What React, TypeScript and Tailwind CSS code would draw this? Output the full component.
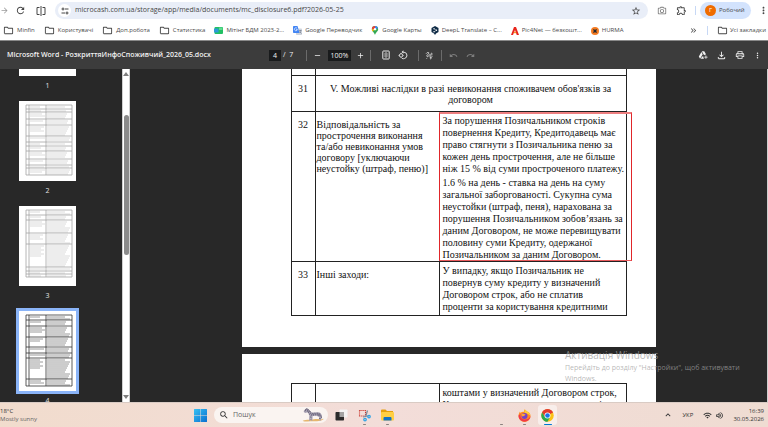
import React from "react";
import {
  MdArrowForward,
  MdRefresh,
  MdStarBorder,
  MdOutlineCameraAlt,
  MdOutlineExtension,
  MdMoreVert,
  MdAdd,
  MdRemove,
  MdRotate90DegreesCcw,
  MdUndo,
  MdRedo,
  MdOutlineAddToDrive,
  MdOutlineFileDownload,
  MdOutlinePrint,
  MdOutlineFolder,
  MdWifi,
  MdOutlineVolumeUp,
  MdKeyboardArrowUp,
  MdKeyboardDoubleArrowRight,
  MdSearch,
} from "react-icons/md";

/* ===== ICONS ===== */

const SplitIcon = () => (
  <svg viewBox="0 0 20 20" className="size-[10px]" fill="none" stroke="currentColor" strokeWidth="2">
    <path d="M7 3H2v14h5M10 0v20M13 3h5v14h-5" />
  </svg>
);

const TuneIcon = () => (
  <svg viewBox="0 0 16 16" className="size-[8px]" fill="none" stroke="currentColor" strokeWidth="2">
    <path d="M8 4h7M1 12h7" />
    <circle cx="4" cy="4" r="2" />
    <circle cx="12" cy="12" r="2" />
  </svg>
);

const FitIcon = () => (
  <svg viewBox="0 0 20 24" className="h-[10px] w-[8px]" fill="none" stroke="currentColor" strokeWidth="2.4">
    <rect x="2" y="2" width="16" height="20" rx="1.5" />
    <path d="M7 9l3-3 3 3M7 15l3 3 3-3M6 12h8" />
  </svg>
);

const DrawIcon = () => (
  <svg viewBox="0 0 24 24" className="size-[9px]" fill="none" stroke="currentColor" strokeWidth="2.2">
    <path d="M3 7c3-4 8-4 7-1-1 3-6 5-5 8 1 2 5-1 8-4s5-5 6-3-6 6-6 9 5 0 7-2" />
    <path d="M4 20l2-1M13 20c2 2 5 0 3-3" />
  </svg>
);

const SheetIcon = () => (
  <svg viewBox="0 0 18 14" className="h-[7px] w-[9px]">
    <rect x="1" width="17" height="14" rx="2" fill="#21c063" />
    <rect y="3" width="9" height="8" rx="1" fill="#2c9ad8" />
    <path d="M10 1h7v5h-7z" fill="#5fdc90" />
  </svg>
);

const TranslateIcon = () => (
  <svg viewBox="0 0 18 18" className="size-[9px]">
    <rect x="6" y="5" width="12" height="13" rx="1.5" fill="#cfd4dd" />
    <path d="M1.5 0H9l4 14H1.500A1.500 1.500 0 010 12.500v-11A1.500 1.500 0 011.500 0z" fill="#4285f4" />
    <path d="M8 4.500A3 3 0 106 9.500c1.700 0 2.700-1 2.700-2.700H6" fill="none" stroke="#fff" strokeWidth="1.300" />
    <path d="M12 9h5M15 8v1M16 9c-.5 2-1 3-3 5M13 11l4 4" fill="none" stroke="#5f6b7d" strokeWidth="1" />
  </svg>
);

const MapsIcon = () => (
  <svg viewBox="0 0 16 20" className="h-[9px] w-[8px]">
    <path d="M8 0a7 7 0 017 7c0 5-5 6-7 13C6 13 1 12 1 7a7 7 0 017-7z" fill="#34a853" />
    <path d="M1 7a7 7 0 017-7v7z" fill="#ea4335" />
    <path d="M8 0a7 7 0 016.700 5L8 7z" fill="#4285f4" />
    <path d="M1 7l7 0-5.500 5A8 8 0 011 7z" fill="#fbbc04" />
    <circle cx="8" cy="7" r="2.600" fill="#fff" />
  </svg>
);

const DeeplIcon = () => (
  <svg viewBox="0 0 16 18" className="h-[9px] w-[8px]">
    <path d="M8 0l7 4v8l-5 3-2 3-2-3-5-3V4z" fill="#0f2b46" />
    <path d="M6 5.500l5 3-5 3" fill="none" stroke="#fff" strokeWidth="1" />
    <circle cx="6" cy="5.500" r="1.300" fill="#fff" />
    <circle cx="11" cy="8.500" r="1.300" fill="#fff" />
    <circle cx="6" cy="11.500" r="1.300" fill="#fff" />
  </svg>
);

const PicIcon = () => (
  <svg viewBox="0 0 16 16" className="size-[8px]">
    <path d="M6 0h4l6 16h-4.500L8 6 4 16H0z" fill="#e8261c" />
    <path d="M5 11l3-2 3 2-3 2z" fill="#f7941d" />
  </svg>
);

const HurmaIcon = () => (
  <svg viewBox="0 0 16 16" className="size-[8px]">
    <circle cx="8" cy="8" r="8" fill="#f47a20" />
    <path d="M4 4l4 1.500L12 4l-1.500 4L12 12l-4-1.500L4 12l1.500-4z" fill="#1d2733" />
  </svg>
);

const FolderIcon = () => <MdOutlineFolder className="size-[11px] text-[#474747]" />;

const WindowsIcon = () => (
  <svg viewBox="0 0 26 26" className="size-[13px]">
    <defs>
      <linearGradient id="win" x1="0" y1="0" x2="1" y2="1">
        <stop offset="0" stopColor="#35c1f3" />
        <stop offset="1" stopColor="#0a6fd0" />
      </linearGradient>
    </defs>
    <path d="M0 1a1 1 0 011-1h11.500v12.500H0zM13.500 0H25a1 1 0 011 1v11.500H13.500zM0 13.500h12.500V26H1a1 1 0 01-1-1zM13.500 13.500H26V25a1 1 0 01-1 1H13.500z" fill="url(#win)" />
  </svg>
);

const ZebraIcon = () => (
  <svg viewBox="0 0 66 42" className="h-[14px] w-[22px]">
    <path d="M2 38c12-5 24-1 34-4s18 2 29-2c-3 6-16 8-30 8S8 42 2 38z" fill="#e6b66e" />
    <path d="M5 9l6-7 6 1 7 7 6 4 18-1c7 0 11 4 11 12l1 7-3-5-1 11h-3l-2-12-8-3-11 1-1 14h-3l-2-13-2 13h-3l1-16-5-9-7 2-4-2z" fill="#a9a3b5" />
    <path d="M12 3l-3 7M18 5l-2 6M22 9l-4 6M27 13l-5 7M32 14l-4 9M37 14l-3 9M42 14l-1 8M47 14l1 9M52 16l-1 9M24 27l4 1M24 33l4 1M51 31l5 1M12 2c6 0 10 5 14 10M56 20l3 11" fill="none" stroke="#463f57" strokeWidth="2" />
  </svg>
);

const TaskViewIcon = () => (
  <svg viewBox="0 0 26 24" className="h-[12px] w-[13px]">
    <rect x="9" y="1" width="16" height="16" rx="1.500" fill="#f4f4f4" />
    <rect x="1" y="6" width="17" height="17" rx="1.500" fill="#2b2b2b" />
    <path d="M9 6h9v10H9z" fill="#a3a3a3" />
  </svg>
);

const SnipIcon = () => (
  <svg viewBox="0 0 26 26" className="size-[13px]" fill="none">
    <rect x="3" y="3" width="12" height="11" stroke="#c8352b" strokeWidth="2.200" strokeDasharray="2.200 1.600" />
    <path d="M19 3l-4 13M10 16l14-3" stroke="#7c8a99" strokeWidth="2.500" />
    <circle cx="22" cy="15" r="2.500" stroke="#2fa4e7" strokeWidth="2.500" />
    <circle cx="14" cy="21" r="2.500" stroke="#2fa4e7" strokeWidth="2.500" />
  </svg>
);

const ExplorerIcon = () => (
  <svg viewBox="0 0 26 24" className="h-[12px] w-[13px]">
    <path d="M0 3a2 2 0 012-2h7l3 3h12v8H0z" fill="#e5a00d" />
    <rect y="6" width="26" height="17" rx="2" fill="#ffcf43" />
    <path d="M5 23v-5a2 2 0 012-2h12a2 2 0 012 2v5z" fill="#1273c4" />
  </svg>
);

const FirefoxIcon = () => (
  <svg viewBox="0 0 26 26" className="size-[13px]">
    <path d="M13 1c3 1 4 3 4 4 4 0 8 4 8 9a12 12 0 01-24 0c0-4 2-7 3-9l1 3c2-2 5-3 7-2 0-2 0-4 1-5z" fill="#ff8a1f" />
    <path d="M1 13c0 7 5 12 12 12s12-5 12-11c-2 5-6 7-11 7S4 18 5 10z" fill="#f0374b" />
    <path d="M13 1c3 1 4 3 4 4 4 0 7 4 8 8l-5-3-7-3z" fill="#ffd23a" />
    <circle cx="13" cy="14" r="6" fill="#7542c9" />
    <path d="M7 11c3-3 6 0 8 0-1 3-4 2-5 4-2 0-3-2-3-4z" fill="#ffa436" />
  </svg>
);

const ChromeIcon = () => (
  <svg viewBox="0 0 48 48" className="size-[13px]">
    <circle cx="24" cy="24" r="23" fill="#fbc116" />
    <path d="M24 24L4.100 12.500A23 23 0 0143.900 12.500z" fill="#e33b2e" />
    <path d="M24 13H44.200A23 23 0 004.100 12.500L14 29z" fill="#e33b2e" />
    <path d="M4.100 12.500A23 23 0 0024 47l10-18H14z" fill="#2da94f" />
    <circle cx="24" cy="24" r="11" fill="#fff" />
    <circle cx="24" cy="24" r="8.500" fill="#1a73e8" />
  </svg>
);

/* ===== BROWSER CHROME ===== */

interface Bookmark {
  label: string;
  icon: React.ReactNode;
}

const bookmarks: Bookmark[] = [
  { label: "Minfin", icon: <FolderIcon /> },
  { label: "Користувачі", icon: <FolderIcon /> },
  { label: "Доп.робота", icon: <FolderIcon /> },
  { label: "Статистика", icon: <FolderIcon /> },
  { label: "Мітінг БДМ 2023-2...", icon: <SheetIcon /> },
  { label: "Google Переводчик", icon: <TranslateIcon /> },
  { label: "Google Карты", icon: <MapsIcon /> },
  { label: "DeepL Translate – C...", icon: <DeeplIcon /> },
  { label: "Pic4Net — безкошт...", icon: <PicIcon /> },
  { label: "HURMA", icon: <HurmaIcon /> },
];

const AddressBar = () => (
  <div className="flex h-[21px] items-center bg-white text-[#474747]">
    <button aria-label="Вперед" className="w-[15px] text-[#9a9a9a]">
      <MdArrowForward className="size-[9px]" />
    </button>
    <button aria-label="Оновити" className="w-[21px]">
      <MdRefresh className="size-[11px]" />
    </button>
    <button aria-label="Розділений екран" className="w-[19px]">
      <SplitIcon />
    </button>
    <div className="flex h-[17px] flex-1 items-center rounded-full bg-[#e9eef8] pr-[7px] pl-[3px]">
      <button aria-label="Дані сайту" className="flex size-[13px] items-center justify-center rounded-full bg-white">
        <TuneIcon />
      </button>
      <input
        aria-label="Адреса"
        defaultValue="microcash.com.ua/storage/app/media/documents/mc_disclosure6.pdf?2026-05-25"
        className="ml-1 min-w-0 flex-1 bg-transparent text-[7px] outline-none"
      />
      <button aria-label="Додати закладку">
        <MdStarBorder className="size-[10px]" />
      </button>
    </div>
    <button aria-label="Знімок" className="ml-[9px] text-[#777]">
      <MdOutlineCameraAlt className="size-[10px]" />
    </button>
    <button aria-label="Розширення" className="ml-[9px]">
      <MdOutlineExtension className="size-[11px]" />
    </button>
    <span className="ml-2 h-[9px] w-px bg-[#c7d8f5]" />
    <button className="ml-1 flex h-[17px] w-[51px] items-center gap-[3px] rounded-full bg-[#d3e3fd] pl-[5px] text-[6px]">
      <span className="flex size-[11px] items-center justify-center rounded-full bg-[#ef6c00] text-[6px] text-white">Г</span>
      Робочий
    </button>
    <button aria-label="Меню" className="ml-[7px] mr-[-1px]">
      <MdMoreVert className="size-[11px]" />
    </button>
  </div>
);

const BookmarksBar = () => (
  <nav className="flex h-[19px] items-center gap-[9px] bg-white pr-[2px] pl-[3px] text-[6px] whitespace-nowrap text-[#4a4a4a]">
    {bookmarks.map((item) => (
      <a key={item.label} href="#" className="flex items-center gap-[3px]">
        {item.icon}
        {item.label}
      </a>
    ))}
    <button aria-label="Інші закладки" className="ml-auto">
      <MdKeyboardDoubleArrowRight className="size-[9px]" />
    </button>
    <span className="h-[9px] w-px bg-[#c7d8f5]" />
    <a href="#" className="flex items-center gap-[2px]">
      <FolderIcon />
      Усі закладки
    </a>
  </nav>
);

/* ===== PDF VIEWER ===== */

const Divider = () => <span className="h-[11px] w-px bg-[#6b6b6b]" />;

const ViewerToolbar = () => (
  <header className="flex h-[29px] shrink-0 items-center border-t border-[#8a8a8a] bg-[#3c3c3c] text-[7px] text-[#f1f1f1]">
    <h1 className="w-[269px] pl-[7px] font-semibold whitespace-nowrap">
      Microsoft Word - РозкриттяИнфоСпоживчий_2026_05.docx
    </h1>
    <input aria-label="Сторінка" defaultValue="4" className="h-[11px] w-3 bg-[#191b1c] text-center outline-none" />
    <span className="w-[25px] pl-[2px] whitespace-pre">/  7</span>
    <Divider />
    <button aria-label="Зменшити" className="ml-[6px]">
      <MdRemove className="size-[9px]" />
    </button>
    <input aria-label="Масштаб" defaultValue="100%" className="ml-[6px] h-[11px] w-[23px] bg-[#191b1c] text-center outline-none" />
    <button aria-label="Збільшити" className="ml-[5px] mr-[5px]">
      <MdAdd className="size-[9px]" />
    </button>
    <Divider />
    <button aria-label="За розміром сторінки" className="ml-[11px]">
      <FitIcon />
    </button>
    <button aria-label="Повернути" className="ml-2 mr-[10px]">
      <MdRotate90DegreesCcw className="size-[10px]" />
    </button>
    <Divider />
    <button aria-label="Малювати" className="ml-[6px] mr-[7px]">
      <DrawIcon />
    </button>
    <Divider />
    <button aria-label="Скасувати" className="ml-[7px] text-[#7d7d7d]">
      <MdUndo className="size-[9px]" />
    </button>
    <button aria-label="Повторити" className="ml-2 text-[#7d7d7d]">
      <MdRedo className="size-[9px]" />
    </button>
    <div className="ml-auto flex items-center gap-2 pr-[6px]">
      <button aria-label="Зберегти на Диск">
        <MdOutlineAddToDrive className="size-[10px]" />
      </button>
      <button aria-label="Завантажити">
        <MdOutlineFileDownload className="size-[11px]" />
      </button>
      <button aria-label="Друк">
        <MdOutlinePrint className="size-[10px]" />
      </button>
      <button aria-label="Ще">
        <MdMoreVert className="size-[9px]" />
      </button>
    </div>
  </header>
);

interface Thumb {
  page: number;
  // y of each horizontal rule; the last one closes the table
  rules: number[];
  active?: boolean;
}

const thumbs: Thumb[] = [
  { page: 1, rules: [4, 20, 40, 71] },
  { page: 2, rules: [4, 8, 11, 18, 24, 35, 41, 45, 50, 58, 64, 67, 74] },
  { page: 3, rules: [4, 9, 14, 27, 38, 61, 65, 68, 71] },
  { page: 4, rules: [4, 9, 15, 26, 36, 42, 47, 68, 75], active: true },
];

const ThumbDrawing = ({ rules, active }: Thumb) => {
  const line = active ? "#333" : "#a3a3a3";
  const ink = active ? "#8f8f8f" : "#cccccc";
  const bottom = rules[rules.length - 1];
  return (
    <svg viewBox="0 0 57 80" className="size-full">
      {rules.slice(0, -1).map((top, i) => {
        const height = rules[i + 1] - top;
        const count = Math.floor((height - 1) / 2);
        return (
          <g key={top} stroke={ink} strokeWidth={active ? 0.9 : 0.7}>
            {Array.from({ length: count }, (_, n) => (
              <path
                key={n}
                d={`M28 ${top + 2 + n * 2}h${18 + ((n * 5 + i) % 6)}${
                  n < count * 0.5 ? `M11 ${top + 2 + n * 2}h${10 + ((n * 3 + i) % 6)}` : ""
                }`}
              />
            ))}
          </g>
        );
      })}
      <g stroke={line} strokeWidth="0.8" fill="none">
        {rules.map((y) => (
          <path key={y} d={`M7 ${y}H53`} />
        ))}
        <path d={`M7 4V${bottom}M10 4V${bottom}M27 4V${bottom}M53 4V${bottom}`} />
      </g>
    </svg>
  );
};

const Sidebar = () => (
  <aside className="flex w-[130px] shrink-0 overflow-hidden">
    <div className="-mt-[73px] flex w-[122px] flex-col pl-[19px]">
      {thumbs.map((thumb) => (
        <button key={thumb.page} className="w-[57px] shrink-0 text-[7px] text-[#e3e3e3]">
          <span className={`block h-[80px] bg-white ${thumb.active ? "ring-3 ring-[#8ab4f8]" : ""}`}>
            <ThumbDrawing {...thumb} />
          </span>
          <span className="block h-[25px] leading-[19px]">{thumb.page}</span>
        </button>
      ))}
    </div>
    {/* scrollbar */}
    <div className="flex w-2 flex-col items-center border-x border-[#d0d0d0] bg-white">
      <span className="mt-[3px] border-x-3 border-b-4 border-x-transparent border-b-[#7f7f7f]" />
      <span className="mt-[39px] h-[140px] w-[5px] rounded-full bg-[#8b8b8b]" />
      <span className="mt-auto mb-[3px] border-x-3 border-t-4 border-x-transparent border-t-[#7f7f7f]" />
    </div>
  </aside>
);

const numCell = "border border-[#222] pt-[7px] text-center align-top leading-[11px]";
const leftCell = "border border-[#222] pt-[7px] pl-px align-top leading-[11px] whitespace-nowrap";
const rightCell = "relative border border-[#222] pt-[3px] pl-[3px] align-top leading-3 whitespace-nowrap";
const tableClass = "ml-[49px] w-[336px] table-fixed border-collapse";

const Columns = () => (
  <colgroup>
    <col className="w-6" />
    <col className="w-[124px]" />
    <col />
  </colgroup>
);

const DocumentPages = () => (
  <main className="flex min-w-0 flex-1 flex-col items-center gap-[7px] overflow-hidden font-['Liberation_Serif',serif] text-[10px] text-[#111]">
    <section className="w-[414px] shrink-0 bg-white pb-[31px]">
      <table className={tableClass}>
        <Columns />
        <tbody>
          <tr className="h-[6px]">
            <td className="border-x border-[#222]" />
            <td className="border-l border-[#222]" />
            <td className="border-r border-[#222]" />
          </tr>
          <tr className="h-9">
            <td className={numCell}>31</td>
            <td colSpan={2} className="border border-[#222] pt-[7px] text-center align-top leading-[11px] whitespace-nowrap">
              V. Можливі наслідки в разі невиконання споживачем обов'язків за
              <br />
              договором
            </td>
          </tr>
          <tr>
            <td className={numCell}>32</td>
            <td className={leftCell}>
              Відповідальність за
              <br />
              прострочення виконання
              <br />
              та/або невиконання умов
              <br />
              договору [уключаючи
              <br />
              неустойку (штраф, пеню)]
            </td>
            <td className={rightCell}>
              <p>
                За порушення Позичальником строків
                <br />
                повернення Кредиту, Кредитодавець має
                <br />
                право стягнути з Позичальника пеню за
                <br />
                кожен день прострочення, але не більше
                <br />
                ніж 15 % від суми простроченого платежу.
              </p>
              <p className="mt-[2px]">
                1.6 % на день - ставка на день на суму
                <br />
                загальної заборгованості. Сукупна сума
                <br />
                неустойки (штраф, пеня), нарахована за
                <br />
                порушення Позичальником зобов’язань за
                <br />
                даним Договором, не може перевищувати
                <br />
                половину суми Кредиту, одержаної
                <br />
                Позичальником за даним Договором.
              </p>
              {/* highlighted clause */}
              <div className="absolute top-0 -right-[6px] bottom-0 -left-px border border-t-2 border-x-[#e0262a] border-t-[#ee7f80] border-b-[#e85a5c]" />
            </td>
          </tr>
          <tr className="h-[54px]">
            <td className={numCell}>33</td>
            <td className={leftCell}>Інші заходи:</td>
            <td className={rightCell}>
              У випадку, якщо Позичальник не
              <br />
              повернув суму кредиту у визначений
              <br />
              Договором строк, або не сплатив
              <br />
              проценти за користування кредитними
            </td>
          </tr>
        </tbody>
      </table>
    </section>

    <section className="w-[414px] shrink-0 bg-white pt-[29px]">
      <table className={tableClass}>
        <Columns />
        <tbody>
          <tr>
            <td className={numCell} />
            <td className={leftCell} />
            <td className={rightCell}>
              коштами у визначений Договором строк,
              <br />
              Кредитодавець має право вимагати від
            </td>
          </tr>
        </tbody>
      </table>
    </section>
  </main>
);

const ActivationNotice = () => (
  <div className="absolute bottom-[18px] left-[565px] text-[7px] leading-[11px] whitespace-nowrap text-[#a0a0a0]/75">
    <p className="text-[10px] leading-[13px]">Активація Windows</p>
    <p>Перейдіть до розділу "Настройки", щоб активувати</p>
    <p>Windows.</p>
  </div>
);

/* ===== TASKBAR ===== */

interface AppButtonProps {
  label: string;
  icon?: React.ReactNode;
  running?: boolean;
  active?: boolean;
}

const AppButton = ({ label, icon, running, active }: AppButtonProps) => (
  <button
    aria-label={label}
    className={`relative flex h-5 w-[19px] items-center justify-center rounded-[3px] ${active ? "bg-white/50" : ""}`}
  >
    {icon}
    {running && (
      <span
        className={`absolute bottom-0 h-px rounded-full ${active ? "w-2 bg-[#0078d4]" : "w-[3px] bg-[#8a8280]"}`}
      />
    )}
  </button>
);

const Taskbar = () => (
  <footer className="flex h-[25px] shrink-0 items-center border-t border-[#d9cbc4] bg-linear-to-r from-[#f1dccd] via-[#f3ddd9] to-[#efdcd2] text-[6px] text-[#333]">
    <div className="w-[194px] leading-2 whitespace-nowrap">
      <p>18°C</p>
      <p className="text-[#666]">Mostly sunny</p>
    </div>
    <button aria-label="Пуск">
      <WindowsIcon />
    </button>
    <label className="ml-[7px] flex h-4 w-[114px] items-center rounded-full bg-[#faf4f1] pr-1 pl-[5px]">
      <MdSearch className="size-[10px] shrink-0" />
      <input
        aria-label="Пошук"
        placeholder="Пошук"
        className="ml-1 min-w-0 flex-1 bg-transparent text-[7px] outline-none placeholder:text-[#666]"
      />
      <ZebraIcon />
    </label>
    <div className="ml-1 flex gap-1">
      <AppButton label="Подання завдань" icon={<TaskViewIcon />} />
      <AppButton label="Ножиці" icon={<SnipIcon />} running />
      <AppButton label="Провідник" icon={<ExplorerIcon />} running />
    </div>
    <div className="ml-[95px] flex gap-1">
      <AppButton label="Програма" running />
      <AppButton label="Firefox" icon={<FirefoxIcon />} running />
      <AppButton label="Chrome" icon={<ChromeIcon />} running active />
    </div>
    <div className="ml-auto flex items-center pr-1">
      <button aria-label="Приховані піктограми">
        <MdKeyboardArrowUp className="size-[10px]" />
      </button>
      <span className="ml-[9px]">УКР</span>
      <MdWifi className="ml-[10px] size-[9px]" />
      <MdOutlineVolumeUp className="ml-[3px] size-[9px]" />
      <div className="ml-[9px] text-right leading-2">
        <p>16:39</p>
        <p>30.05.2026</p>
      </div>
    </div>
  </footer>
);

export default function App() {
  return (
    <div className="flex h-screen flex-col overflow-hidden font-['Open_Sans','Noto_Sans',sans-serif]">
      <AddressBar />
      <BookmarksBar />
      <ViewerToolbar />
      <div className="relative flex min-h-0 flex-1 bg-[#282828]">
        <Sidebar />
        <DocumentPages />
        <div className="w-px bg-[#d0d0d0]" />
        <ActivationNotice />
      </div>
      <Taskbar />
    </div>
  );
}
